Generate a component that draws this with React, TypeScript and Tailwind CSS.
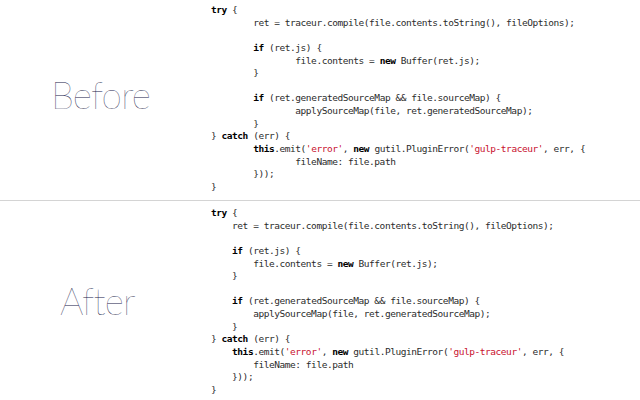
import React from "react";

const source = [
  "try {",
  "\tret = traceur.compile(file.contents.toString(), fileOptions);",
  "",
  "\tif (ret.js) {",
  "\t\tfile.contents = new Buffer(ret.js);",
  "\t}",
  "",
  "\tif (ret.generatedSourceMap && file.sourceMap) {",
  "\t\tapplySourceMap(file, ret.generatedSourceMap);",
  "\t}",
  "} catch (err) {",
  "\tthis.emit('error', new gutil.PluginError('gulp-traceur', err, {",
  "\t\tfileName: file.path",
  "\t}));",
  "}",
];

const keywords = new Set(["try", "if", "new", "catch", "this"]);

function renderLine(line: string) {
  const parts = line.split(/('[^']*'|\b(?:try|if|new|catch|this)\b)/);
  return parts.map((p, i) => {
    if (!p) return null;
    if (p.startsWith("'")) {
      return (
        <span key={i} className="text-[#c8102e]">
          {p}
        </span>
      );
    }
    if (keywords.has(p)) {
      return (
        <span key={i} className="font-bold text-black">
          {p}
        </span>
      );
    }
    return <span key={i}>{p}</span>;
  });
}

const CodeBlock = ({ indent }: { indent: number }) => {
  const pad = " ".repeat(indent);
  return (
    <pre className="font-['DejaVu_Sans_Mono',monospace] text-[9.5px] leading-[12.64px] tracking-[-0.45px] text-[#2b2b2b]">
      {source.map((l, i) => (
        <div key={i} className="h-[12.64px] whitespace-pre">
          {renderLine(l.replace(/\t/g, pad))}
        </div>
      ))}
    </pre>
  );
};

const Panel = ({ label, indent, top }: { label: string; indent: number; top: boolean }) => (
  <div className={top ? "flex h-[201px] border-b border-[#d4d4d4]" : "flex h-[199px]"}>
    <div className={top ? "flex w-[211px] items-center justify-center pb-[10px] pr-[10px]" : "flex w-[211px] items-center justify-center pr-[16px]"}>
      <span className="font-['Lato',sans-serif] text-[37px] font-thin tracking-[-0.8px] text-[#22224a]">{label}</span>
    </div>
    <div className={top ? "pt-[4px]" : "pt-[6px]"}>
      <CodeBlock indent={indent} />
    </div>
  </div>
);

export default function App() {
  return (
    <div className="h-[400px] w-[640px] overflow-hidden bg-white">
      <Panel label="Before" indent={8} top />
      <Panel label="After" indent={4} top={false} />
    </div>
  );
}
